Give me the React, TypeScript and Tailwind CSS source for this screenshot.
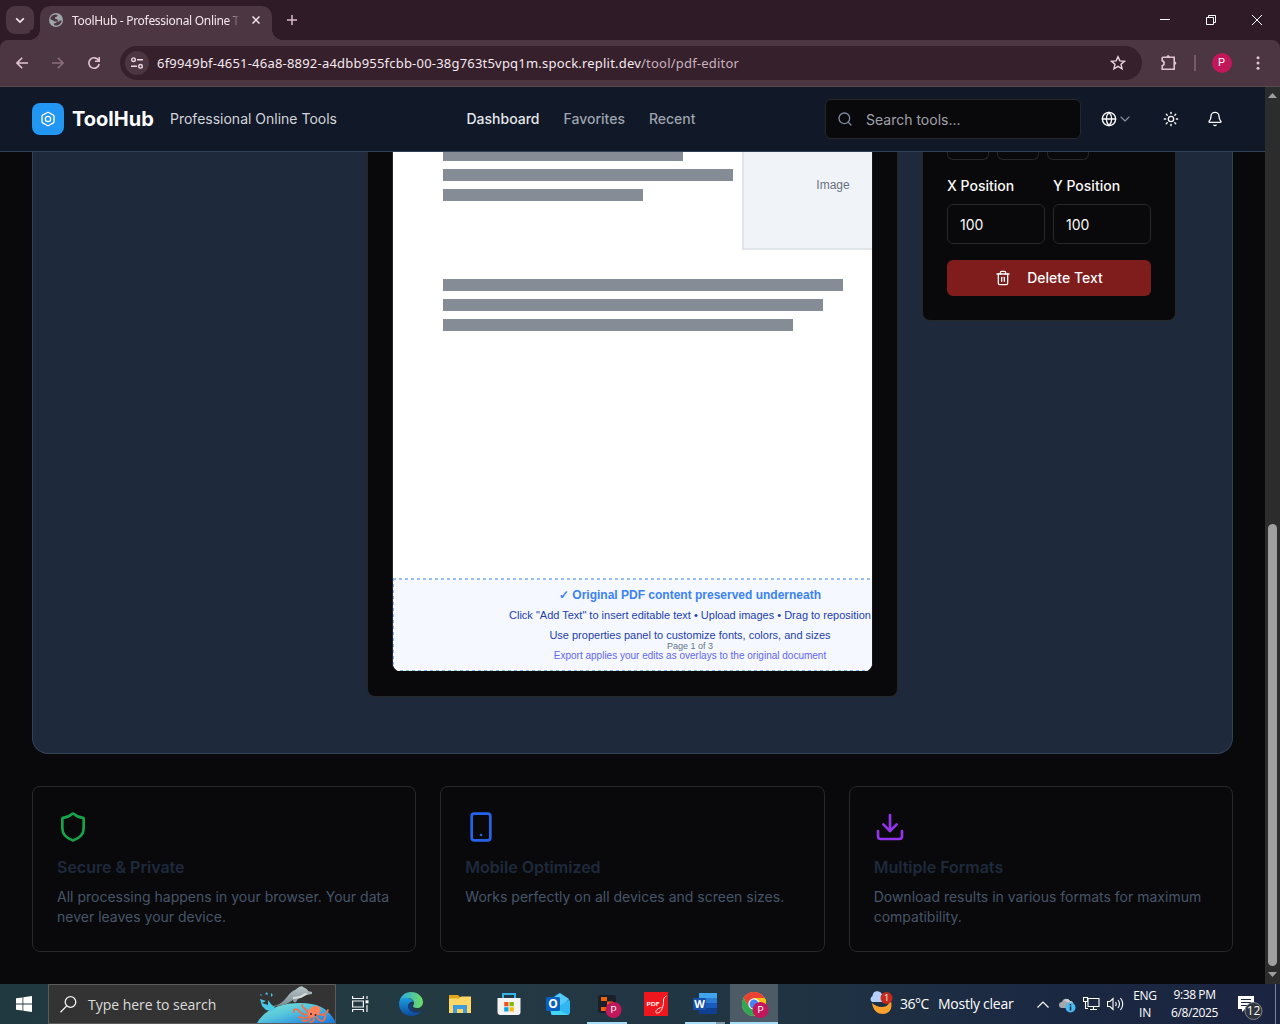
import type { ReactNode } from "react";
import {
  Bell,
  Bolt,
  ChevronDown,
  Download,
  Globe,
  Search,
  Shield,
  Smartphone,
  Sun,
  Trash2,
} from "lucide-react";

function TabStrip() {
  return (
    <div className="flex h-10 shrink-0 items-start bg-[#2f1b27] text-[#e9d5de]">
      <button className="mt-1.5 ml-1.5 flex h-7 w-7 items-center justify-center rounded-[9px] bg-[#4b3641]">
        <svg width="10" height="7" viewBox="0 0 10 7" fill="none" stroke="#f3e4ea" strokeWidth="1.7">
          <path d="M1.2 1.3 5 5.1l3.8-3.8" />
        </svg>
      </button>
      <div className="relative mt-1.5 ml-1.5 flex h-[34px] w-[232px] items-center rounded-t-[10px] bg-[#4b3641]">
        <span className="absolute bottom-0 -left-2.5 h-2.5 w-2.5 bg-[radial-gradient(circle_at_0_0,#2f1b27_9.5px,#4b3641_10px)]" />
        <span className="absolute -right-2.5 bottom-0 h-2.5 w-2.5 bg-[radial-gradient(circle_at_100%_0,#2f1b27_9.5px,#4b3641_10px)]" />
        <svg className="mb-1.5 ml-[9px]" width="14" height="14" viewBox="0 0 14 14">
          <circle cx="7" cy="7" r="7" fill="#9ea6ab" />
          <path d="M1.3 6.2C1.5 3.6 3.4 1.6 6.4 1.4L8.6 2 8 3.6l-1.8.6-.3 1.5 2.2.5 1 1.5-1.5.9-2-.2L3.8 7.2z" fill="#4b3641" />
          <path d="M12.6 7.6C12.3 10.7 9.7 12.8 6.6 12.6L5 12l.2-1.7 2-.4.7-1.6 2 .5.8-1.2z" fill="#4b3641" />
        </svg>
        <span className="mb-[4px] ml-[9px] w-[167px] overflow-hidden font-['Noto_Sans','Open_Sans',sans-serif] text-[12px] tracking-[-0.3px] whitespace-nowrap text-[#f3e6ec] [mask-image:linear-gradient(to_right,#000_156px,transparent_168px)]">
          ToolHub - Professional Online Tools
        </span>
        <svg className="mb-1.5 ml-[13px]" width="8" height="8" viewBox="0 0 8 8" stroke="#f3e6ec" strokeWidth="1.5">
          <path d="m.5.5 7 7m0-7-7 7" />
        </svg>
      </div>
      <svg className="mt-[15px] ml-[15px]" width="10" height="10" viewBox="0 0 10 10" stroke="#d9bccb" strokeWidth="1.5">
        <path d="M5 0v10M0 5h10" />
      </svg>
      <div className="mt-[15px] mr-[18px] ml-auto flex items-center gap-[36px]">
        <svg width="10" height="10" viewBox="0 0 10 10" stroke="#fff"><path d="M0 4.5h10" /></svg>
        <svg width="10" height="10" viewBox="0 0 10 10" stroke="#fff" fill="none"><path d="M.5 2.5h7v7h-7zM2.5 2.5v-2h7v7h-2" /></svg>
        <svg width="10" height="10" viewBox="0 0 10 10" stroke="#fff"><path d="m0 0 10 10M10 0 0 10" /></svg>
      </div>
    </div>
  );
}

function Toolbar() {
  return (
    <div className="h-[47px] shrink-0 bg-[#2f1b27]">
      <div className="flex h-full items-center rounded-t-lg border-b border-[#554a4e] bg-[#4b3641]">
        <svg className="ml-4" width="12" height="12" viewBox="0 0 12 12" fill="none" stroke="#e3c3d2" strokeWidth="1.6">
          <path d="M12 6H1.2M6.2.8 1 6l5.2 5.2" />
        </svg>
        <svg className="ml-6" width="12" height="12" viewBox="0 0 12 12" fill="none" stroke="#8b6e7c" strokeWidth="1.6">
          <path d="M0 6h10.8M5.8.8 11 6l-5.2 5.2" />
        </svg>
        <svg className="ml-6" width="12" height="12" viewBox="0 0 12 12" fill="none" stroke="#e3c3d2" strokeWidth="1.6">
          <path d="M10.6 3.4A5.2 5.2 0 1 0 11.2 7M11.2 0v4.2H7" />
        </svg>
        <div className="ml-5 flex h-[34px] w-[1022px] items-center rounded-full bg-[#36202c]">
          <span className="ml-[5px] flex h-6 w-6 items-center justify-center rounded-full bg-[#4b3641]">
            <svg width="12" height="12" viewBox="0 0 12 12" fill="none" stroke="#eed9e2" strokeWidth="1.4">
              <circle cx="2.5" cy="2.7" r="1.8" />
              <path d="M6 2.7h6M0 9.3h6" />
              <circle cx="9.5" cy="9.3" r="1.8" />
            </svg>
          </span>
          <span className="mt-px ml-2 font-['Noto_Sans','Open_Sans',sans-serif] text-[13px] tracking-[0.206px] whitespace-nowrap text-[#c9b3be]">
            <span className="text-[#f5e8ee]">6f9949bf-4651-46a8-8892-a4dbb955fcbb-00-38g763t5vpq1m.spock.replit.dev</span>
            /tool/pdf-editor
          </span>
          <svg className="mr-4 ml-auto" width="16" height="16" viewBox="0 0 16 16" fill="none" stroke="#e9d5de" strokeWidth="1.4">
            <path d="m8 1.7 1.9 4.2 4.6.4-3.5 3 1.1 4.6L8 11.4l-4.1 2.5L5 9.3l-3.5-3 4.6-.4z" />
          </svg>
        </div>
        <svg className="ml-[18px]" width="18" height="18" viewBox="0 0 18 18" fill="none" stroke="#e3c3d2" strokeWidth="1.6">
          <path d="M2.2 3.3h12v4.6M14.2 9.7v5.6h-12v-3.6c2.6-.4 2.6-4.4 0-4.8V3.3M14.2 7v4" />
          <path d="M6.5 3c0-2.3 3.4-2.3 3.4 0zM14.5 7.4c2.4 0 2.4 3.4 0 3.4z" fill="#e3c3d2" stroke="none" />
        </svg>
        <span className="ml-[16px] h-4 w-[1.5px] bg-[#775b69]" />
        <span className="ml-[16px] flex h-5 w-5 items-center justify-center rounded-full bg-[#c2185b] font-[Roboto,sans-serif] text-[11px] text-white">P</span>
        <svg className="ml-6" width="4" height="14" viewBox="0 0 4 14" fill="#e3c3d2">
          <circle cx="2" cy="1.7" r="1.5" /><circle cx="2" cy="7" r="1.5" /><circle cx="2" cy="12.3" r="1.5" />
        </svg>
      </div>
    </div>
  );
}

function SiteHeader() {
  return (
    <header className="flex h-[65px] shrink-0 items-center border-b border-[#334155] bg-[#111827] px-8">
      <div className="flex h-8 w-8 items-center justify-center rounded-lg bg-[#2196f3]">
        <Bolt size={16} color="#fff" />
      </div>
      <h1 className="ml-2 w-[82px] text-xl font-bold whitespace-nowrap text-white">ToolHub</h1>
      <span className="ml-4 w-[168px] text-sm whitespace-nowrap text-[#d1d5db]">Professional Online Tools</span>
      <nav className="ml-[128.5px] flex gap-6 text-sm font-medium text-[#9ca3af]">
        <a className="text-[#e5e7eb]">Dashboard</a>
        <a>Favorites</a>
        <a>Recent</a>
      </nav>
      <div className="ml-auto flex h-10 w-64 items-center rounded-md border border-[#27272a] bg-[#09090b] pl-[11px]">
        <Search size={16} color="#7c8ba1" />
        <span className="mt-0.5 ml-[13px] text-sm text-[#a1a1aa]">Search tools...</span>
      </div>
      <div className="ml-5 flex items-center text-[#fafafa]">
        <Globe size={16} />
        <ChevronDown size={16} strokeWidth={1.6} color="#8b919c" />
        <Sun className="ml-[30px]" size={16} />
        <Bell className="mr-[10px] ml-7" size={16} />
      </div>
    </header>
  );
}

function Bars({ widths }: { widths: string[] }) {
  return (
    <div className="flex flex-col gap-2">
      {widths.map((w) => (
        <div key={w} className={`h-3 bg-[#868c96] ${w}`} />
      ))}
    </div>
  );
}

function PdfCanvas() {
  return (
    <div className="h-[545px] w-[531px] rounded-b-lg border border-t-0 border-[#27272a] bg-[#09090b] px-6">
      <div className="h-[519px] w-[481px] overflow-hidden rounded-b-lg border-x border-[#27272a] border-r-[#18181b] bg-white font-['Liberation_Sans',Arial,sans-serif]">
        <div className="flex h-full w-[593px] flex-col">
          <div className="-mt-[3px] flex h-[130px] shrink-0 pl-[50px]">
            <div className="w-[299px]">
              <Bars widths={["w-[240px]", "w-[290px]", "w-[200px]"]} />
            </div>
            <div className="flex h-[101px] w-[182px] items-start justify-center border-2 border-t-0 border-[#e1e4e8] bg-[#f0f4f9] pt-[28px] text-xs text-[#6b7280]">
              Image
            </div>
          </div>
          <div className="pl-[50px]">
            <Bars widths={["w-[400px]", "w-[380px]", "w-[350px]"]} />
          </div>
          <div className="mt-auto h-0.5 bg-[repeating-linear-gradient(90deg,#97bdf9_0_3px,#fff_3px_6px)]" />
          <div className="flex h-[91px] shrink-0 bg-[#f5f8ff]">
            <div className="w-px bg-[repeating-linear-gradient(0deg,#86b2f8_0_3px,#f5f8ff_3px_6px)]" />
            <div className="relative flex grow flex-col items-center whitespace-nowrap">
              <p className="mt-[7px] text-xs leading-[16px] font-bold text-[#3b82f6]">✓ Original PDF content preserved underneath</p>
              <p className="mt-[4px] text-[11px] leading-[16px] text-[#1e40af]">
                Click "Add Text" to insert editable text • Upload images • Drag to reposition
              </p>
              <p className="mt-[4px] text-[11px] leading-[16px] text-[#1e40af]">Use properties panel to customize fonts, colors, and sizes</p>
              <p className="-mt-[3px] text-[9px] leading-[12px] text-[#64748b]">Page 1 of 3</p>
              <p className="-mt-[2px] text-[10px] leading-[12px] text-[#6366f1]">Export applies your edits as overlays to the original document</p>
              <div className="mt-auto h-px w-full bg-[repeating-linear-gradient(90deg,#86b2f8_0_3px,#f5f8ff_3px_6px)]" />
            </div>
          </div>
        </div>
      </div>
    </div>
  );
}

function Field({ label, value }: { label: string; value: string }) {
  return (
    <div className="flex-1">
      <div className="text-sm leading-[14px] font-medium">{label}</div>
      <div className="mt-[11px] flex h-10 items-center rounded-md border border-[#27272a] pt-0.5 pl-3 text-sm">{value}</div>
    </div>
  );
}

function Properties() {
  return (
    <aside className="h-[169px] w-[254px] rounded-b-lg border border-t-0 border-[#27272a] bg-[#09090b] px-6 text-[#fafafa]">
      <div className="flex gap-2">
        {[0, 1, 2].map((i) => (
          <span key={i} className="h-2 w-[42px] rounded-b-md border border-t-0 border-[#27272a]" />
        ))}
      </div>
      <div className="mt-[19px] flex gap-2">
        <Field label="X Position" value="100" />
        <Field label="Y Position" value="100" />
      </div>
      <button className="mt-4 flex h-9 w-full items-center justify-center rounded-md bg-[#7f1d1d] text-sm font-medium">
        <Trash2 className="mr-4" size={16} />
        Delete Text
      </button>
    </aside>
  );
}

function Feature({ icon, title, text }: { icon: ReactNode; title: string; text: string }) {
  return (
    <div className="h-[166px] rounded-lg border border-[#27272a] p-6">
      {icon}
      <h3 className="mt-3 text-base font-semibold text-[#1e293b]">{title}</h3>
      <p className="mt-2 text-sm text-[#475569]">{text}</p>
    </div>
  );
}

function Scrollbar() {
  return (
    <div className="flex w-[15px] shrink-0 flex-col items-center bg-[#2c2c2c]">
      <svg className="mt-[6px]" width="9" height="5" viewBox="0 0 9 5" fill="#9f9f9f"><path d="M0 5 4.5 0 9 5z" /></svg>
      <div className="mt-auto h-[442px] w-[9px] rounded-full bg-[#9f9f9f]" />
      <svg className="mt-[6px] mb-[7px]" width="9" height="5" viewBox="0 0 9 5" fill="#9f9f9f"><path d="M0 0h9L4.5 5z" /></svg>
    </div>
  );
}

function Badge() {
  return (
    <g>
      <circle cx="18.500" cy="18" r="8" fill="#c2185b" />
      <text x="18.500" y="21.400" fill="#fff" fontSize="9.500" textAnchor="middle" fontFamily="Roboto">P</text>
    </g>
  );
}

function TaskIcon({ children, active, running }: { children: ReactNode; active?: boolean; running?: string }) {
  return (
    <div className={`flex w-12 flex-col items-center ${active ? "bg-[#4d5b67]" : ""}`}>
      <svg className="mt-2 shrink-0 overflow-visible" width="24" height="24" viewBox="0 0 24 24">{children}</svg>
      <div className={`mt-auto h-0.5 ${running ?? ""}`} />
    </div>
  );
}

function SeaScene() {
  return (
    <svg className="ml-auto" width="78" height="38" viewBox="0 0 78 38">
      <defs>
        <linearGradient id="sea" x1="0" y1="0" x2="1" y2="1">
          <stop offset="0" stopColor="#7fe3d4" /><stop offset=".45" stopColor="#55c5dc" /><stop offset="1" stopColor="#1673e0" />
        </linearGradient>
        <linearGradient id="dol" x1="0" y1="0" x2="0" y2="1">
          <stop offset="0" stopColor="#b9c5c9" /><stop offset="1" stopColor="#74878f" />
        </linearGradient>
      </defs>
      <path d="M0 38C8 24 24 18 43 18s28 6 35 18v2z" fill="url(#sea)" />
      <path d="M14 21c7 0 11-3 16-9 3-4 5-6 8-7l4-3c2-1 4-1 4 0 3 1 5 3 5 4l4 1v2l-6 1c-4 1-6 3-8 4l-2 3c-1 1-3 0-3-2-4 3-10 6-17 6l-3 2z" fill="url(#dol)" />
      <path d="M36 12c4 0 8-1 12-4l3 1-7 4-8 1z" fill="#d9dfe1" />
      <path d="m3 14 6 2-4 2 6 2 0-5 3 4 2 2 3 3-5 2-5-1-4-4zM8 9l2-2 1 3zM14 8l2 2-2 2zM3 9l2 1-1 1z" fill="#48c9e8" />
      <g fill="none" stroke="#f0704c" strokeWidth="1.800" strokeLinecap="round">
        <path d="M52 29c-5 2-8-1-11-4-3-2-5 0-4 2" />
        <path d="M53 31c-4 4-9 1-11 1" />
        <path d="M54 32c-2 4-6 5-9 3" />
        <path d="M57 33c0 3-2 4-4 4" />
        <path d="M60 32c2 5 7 5 8 1s-2-4-2-3" />
        <path d="M61 29c5 2 9 0 10-4" />
        <path d="M51 27c-2-3-6-4-6-7" />
      </g>
      <ellipse cx="57" cy="26.500" rx="7" ry="5" transform="rotate(-35 57 26.500)" fill="#ff8158" />
      <circle cx="54" cy="29" r="1" fill="#33203a" /><circle cx="58.500" cy="30" r="1" fill="#33203a" />
    </svg>
  );
}

function Taskbar() {
  return (
    <footer className="flex h-10 shrink-0 bg-[linear-gradient(90deg,#20383f,#243a43_35%,#203443_60%,#1b2942_80%,#1b2440)] font-['Open_Sans','Noto_Sans',sans-serif] text-white">
      <div className="flex w-12 items-center justify-center">
        <svg width="16" height="16" viewBox="0 0 16 16" fill="#fff"><path d="M0 2.300 6.500 1.400v6.100H0zM7.300 1.300 16 0v7.500H7.300zM0 8.400h6.500v6.200L0 13.700zM7.300 8.400H16V16l-8.700-1.300z" /></svg>
      </div>
      <div className="flex w-[288px] border border-[#5b5b5b] bg-[#333]">
        <svg className="mt-[11px] ml-[11px]" width="17" height="17" viewBox="0 0 17 17" fill="none" stroke="#f2f2f2" strokeWidth="1.300"><circle cx="10.500" cy="6" r="5.300" /><path d="M6.700 9.900.500 16.300" /></svg>
        <span className="mt-2.5 ml-[11px] w-[132px] text-[14px] leading-5 tracking-[-0.03px] whitespace-nowrap text-[#dcdcdc]">Type here to search</span>
        <SeaScene />
      </div>
      <div className="flex w-12 items-center justify-center">
        <svg width="17" height="16" viewBox="0 0 17 16" fill="none" stroke="#f4f4f4" strokeWidth="1.200"><path d="M.6 0v2.500h10.800V0M.6 5h10.800v6H.6zM.6 16v-2.500h10.800V16M15 0v3M15 9v7" /><path d="M13.500 4.300h3v3h-3z" fill="#fff" stroke="none" /></svg>
      </div>
      <div className="ml-[3px] flex gap-[1px]">
        <TaskIcon>
          <defs><linearGradient id="ea"><stop stopColor="#27a8ea" /><stop offset="1" stopColor="#6fdd60" /></linearGradient><linearGradient id="eb" x1="0" y1="0" x2="0" y2="1"><stop stopColor="#1b9ce2" /><stop offset="1" stopColor="#0c4a9e" /></linearGradient></defs>
          <path d="M.4 10.500C1.300 4 6 0 12 0c7 0 12 5 12 10 0 4-3 6-6 6-2.600 0-4-1-4-2 0-.8 1-1 1-3 0-3-3-5-7-5-4 0-6.600 2-7.600 4.500z" fill="url(#ea)" />
          <path d="M.1 11c.5-3 3-5 7-5 4 0 7 2 7 4-2-.7-5 1-5 4 0 4 4 7 8.500 7 2 0 3.500-.5 4.700-1.200C20 22.500 16 24 12 24 5 24-.5 18 .1 11z" fill="url(#eb)" />
          <path d="M9 14c0 4 4 7 8.500 7 2 0 3.500-.5 4.700-1.200.7-.7 0-1.300-.7-1-4 2-8.500.3-9.300-3.300-.3-1.500.2-2.500 1-3.500-2-.5-4.200.3-4.200 2z" fill="#123f88" />
        </TaskIcon>
        <TaskIcon>
          <path d="M1 3h9l2 2h11v16H1z" fill="#e3a51a" /><path d="M1 6.500h10l2-2h10V21H1z" fill="#ffd766" /><path d="M5 21v-8h14v8h-4v-4H9v4z" fill="#3f9bdc" />
        </TaskIcon>
        <TaskIcon>
          <path d="M6 8V2h12v6" fill="none" stroke="#31b5e9" strokeWidth="2" /><path d="M.5 6h23v14q0 3-3 3h-17q-3 0-3-3z" fill="#f3f3f3" /><path fill="#f25022" d="M7.200 10h4.300v4.300H7.200z" /><path fill="#7fba00" d="M12.500 10h4.300v4.300h-4.300z" /><path fill="#00a4ef" d="M7.200 15.200h4.300v4.300H7.200z" /><path fill="#ffb900" d="M12.500 15.200h4.300v4.300h-4.300z" />
        </TaskIcon>
        <TaskIcon>
          <path d="M4 7 13 1l10 6v13l-3 3H7l-3-3z" fill="#176dc4" /><path d="M8 5 14 1l9 6-8 8z" fill="#54caf4" /><path d="m23 8-18 11v3q1 1 2 1h14q3 0 3-3V9z" fill="#2db8ef" /><path d="m5 14 18 9H7q-2 0-2-2z" fill="#43d5fa" /><rect y="5" width="14" height="14" rx="1.500" fill="#0a60bd" /><text x="7" y="16.300" fill="#fff" fontSize="12" fontWeight="700" textAnchor="middle" fontFamily="Open Sans">O</text>
        </TaskIcon>
        <TaskIcon running="w-10 bg-[#a7dcf7]">
          <rect x="3" y="3" width="18" height="18" rx="2" fill="#1a202b" /><path d="M6 5h6v4H6zM12 9.500h6V14h-6zM6 15h6v4H6z" fill="#f26207" /><Badge />
        </TaskIcon>
        <TaskIcon>
          <path d="M0 0h24v24H0z" fill="#ef171d" /><text x="2.500" y="14" fill="#fff" fontSize="6" textLength="13" lengthAdjust="spacingAndGlyphs" fontFamily="Lato" fontWeight="700">PDF</text><path d="M22.500 4c-1.500 1-3.500 2-3 5 .3 4-2 12-6 12-4 0-.5-5 4-5.500" fill="none" stroke="#fff" strokeWidth=".9" />
        </TaskIcon>
        <TaskIcon running="w-10 bg-[linear-gradient(90deg,#a7dcf7_31px,#809dac_31px)]">
          <path d="M6 1h18v6H6z" fill="#41a5ee" /><path d="M6 6h18v6H6z" fill="#2b7cd3" /><path d="M6 11h18v6H6z" fill="#185abd" /><path d="M6 16h18v6H6z" fill="#103f91" /><rect y="6" width="13" height="12" rx="1" fill="#174fa9" /><text x="6.500" y="16" fill="#fff" fontSize="11" fontWeight="700" textAnchor="middle" fontFamily="Open Sans">W</text>
        </TaskIcon>
        <TaskIcon active running="w-full bg-[#a7dcf7]">
          <circle cx="12" cy="12" r="12" fill="#ffcd38" /><path d="M12 12H24A12 12 0 0 0 1.600 6l5 9z" fill="#ea4335" /><path d="M24 8A12 12 0 0 0 22.400 6H12v6h12z" fill="#fbc116" /><path d="M1.600 6A12 12 0 0 0 12 24l5-9H7z" fill="#31a754" /><path d="M1.600 6A12 12 0 0 1 22.400 6H12z" fill="#ea4335" /><circle cx="12" cy="12" r="5.700" fill="#fff" /><circle cx="12" cy="12" r="4.500" fill="#4285f4" /><Badge />
        </TaskIcon>
      </div>
      <div className="mr-1 ml-auto flex">
        <svg className="mt-[7px]" width="25" height="25" viewBox="0 0 25 25">
          <path d="M21 9c1 4-2 7-7 7-4 0-8-2-10-4 1 8 6 11 11 11 6 0 10-5 8-13z" fill="#f8a22d" /><path d="M4 11a3.500 3.500 0 0 1 .5-6A5 5 0 0 1 14 3a4 4 0 0 1 3 8z" fill="#b6d0ff" /><circle cx="18.500" cy="7" r="6" fill="#c42b1c" /><text x="18.500" y="10.200" textAnchor="middle" fontSize="9" fill="#fff" fontFamily="Open Sans">1</text>
        </svg>
        <span className="mt-2.5 ml-[7px] w-[29px] text-[14px] leading-5 tracking-[-0.5px] whitespace-nowrap">36°C</span>
        <span className="mt-2.5 ml-[9px] w-[75px] text-[14px] leading-5 tracking-[-0.25px] whitespace-nowrap">Mostly clear</span>
        <svg className="mt-[17px] ml-6" width="12" height="7" viewBox="0 0 12 7" fill="none" stroke="#fff" strokeWidth="1.200"><path d="m.5 6.500 5.500-5.500 5.500 5.500" /></svg>
        <svg className="mt-[13px] ml-2.5" width="17" height="16" viewBox="0 0 17 16"><path d="M3 11a3 3 0 0 1 0-6C4 1 9 1 11 4c3 0 4 3 3 7z" fill="#a3a8ae" /><path d="M5 3.500C7 1 10 2 11 4c2 0 3 1 3.300 3-4-2-7-2-9.300-3.500z" fill="#c9cdd2" /><circle cx="11.500" cy="10.500" r="5" fill="#49b9ef" /><path d="M11.500 7v1.500M11.500 9.500v4" stroke="#09293d" strokeWidth="1.500" /></svg>
        <svg className="mt-[13px] ml-[7px]" width="17" height="15" viewBox="0 0 17 15" fill="none" stroke="#fff" strokeWidth="1.100"><path d="M5 1.500h11v8H5zM10.500 9.500v3M7 12.500h7M.5.500h4v4h-4zM2.500 4.500v7H5" /></svg>
        <svg className="mt-[13px] ml-[7px]" width="17" height="14" viewBox="0 0 17 14" fill="none" stroke="#fff" strokeWidth="1.100"><path d="M.5 4.500H3L6 1.500v11l-3-3H.5zM8.500 5q1.500 2 0 4M11 3q3 4 0 8M13.500 1q4.500 6 0 12" /></svg>
        <div className="ml-[7px] w-[28px] pt-[3px] text-center text-[12px] leading-[17px] tracking-[-0.3px]">ENG<br />IN</div>
        <div className="ml-[9px] w-[53px] pt-[2px] text-center text-[12px] leading-[18px] tracking-[-0.4px] whitespace-nowrap"><div className="-mx-4">9:38 PM</div><div className="-mx-4">6/8/2025</div></div>
        <svg className="mt-[11px] ml-[17px]" width="27" height="26" viewBox="0 0 27 26"><path d="M0 1h16v13H7l-3 3v-3H0z" fill="#fff" /><path d="M3 4.500h10M3 7.500h10M3 10.500h6" stroke="#1b2440" /><circle cx="15.500" cy="16" r="8.500" fill="#30353c" stroke="#7f858b" /><text x="15.500" y="20.300" textAnchor="middle" fill="#fff" fontSize="12" fontFamily="Open Sans">12</text></svg>
        <span className="ml-[10px] h-full w-px bg-[#7b8291]" />
      </div>
    </footer>
  );
}

export default function App() {
  return (
    <div className="flex h-[1024px] w-[1280px] flex-col overflow-hidden bg-[#09090b]">
      <TabStrip />
      <Toolbar />
      <div className="flex h-[897px] shrink-0">
        <div className="w-[1265px] font-[Inter,sans-serif]">
          <SiteHeader />
          <main className="px-8">
            <section className="flex h-[602px] items-start rounded-b-2xl border border-t-0 border-[#334155] bg-[#1e293b] pl-[334px]">
              <PdfCanvas />
              <div className="ml-6">
                <Properties />
              </div>
            </section>
            <section className="mt-8 grid grid-cols-3 gap-6">
              <Feature icon={<Shield size={32} color="#16a34a" />} title="Secure & Private" text="All processing happens in your browser. Your data never leaves your device." />
              <Feature icon={<Smartphone size={32} color="#2563eb" />} title="Mobile Optimized" text="Works perfectly on all devices and screen sizes." />
              <Feature icon={<Download size={32} color="#9333ea" />} title="Multiple Formats" text="Download results in various formats for maximum compatibility." />
            </section>
          </main>
        </div>
        <Scrollbar />
      </div>
      <Taskbar />
    </div>
  );
}
